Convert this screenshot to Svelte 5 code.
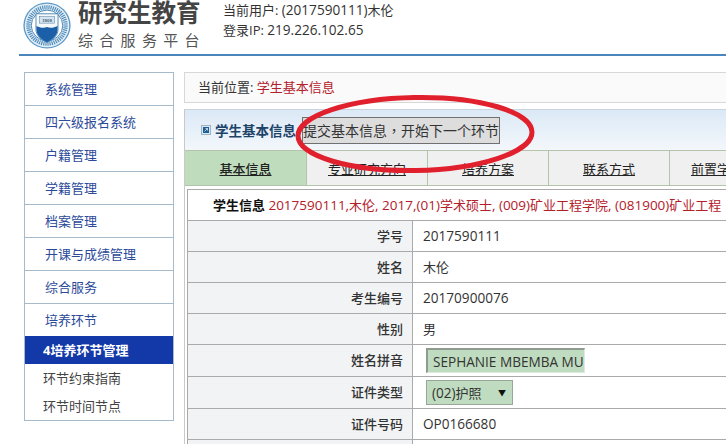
<script>
  const menu = ['系统管理','四六级报名系统','户籍管理','学籍管理','档案管理','开课与成绩管理','综合服务','培养环节'];
  const subs = ['环节约束指南','环节时间节点'];
  const tabs = ['基本信息','专业研究方向','培养方案','联系方式','前置学历信息'];
</script>

<div class="page">
  <header class="top">
    <svg class="logo" viewBox="0 0 50 50" width="48" height="47" preserveAspectRatio="none" aria-hidden="true">
      <circle cx="25" cy="25" r="24.6" fill="#5c9ac8"/>
      <circle cx="25" cy="25" r="23.2" fill="#e4eff7"/>
      <circle cx="25" cy="25" r="19.4" fill="none" stroke="#4f8cba" stroke-width="4.4" stroke-dasharray="1.2 1"/>
      <circle cx="25" cy="25" r="16.4" fill="#fff" stroke="#2f76ab" stroke-width=".9"/>
      <path d="M13.500 12.500h23V29c0 7-5.500 11-11.500 14C19 40 13.500 36 13.500 29z" fill="#f3f8fb" stroke="#2c6ea3" stroke-width=".8"/>
      <rect x="17" y="15.500" width="16" height="7" fill="#d8e5ef" stroke="#5d8aad" stroke-width=".6"/>
      <text x="25" y="20.800" text-anchor="middle" class="year">1909</text>
      <path d="M14 25.500c3.800 2 7.500 2.500 11 1.200 3.500 1.300 7.200.8 11-1.200V29c0 7-5.500 11-11 13.800C19.500 40 14 36 14 29z" fill="#1a5fa8"/>
    </svg>
    <div class="brand">
      <div class="brand-main">研究生教育</div>
      <div class="brand-sub">综合服务平台</div>
    </div>
    <div class="user">
      <div>当前用户: <span class="l">(2017590111)</span>木伦</div>
      <div>登录IP: <span class="l">219.226.102.65</span></div>
    </div>
  </header>

  <div class="body">
    <aside class="side">
      {#each menu as m}
        <div class="item">{m}</div>
      {/each}
      <div class="active">4培养环节管理</div>
      <div class="subs">
        {#each subs as s}
          <div class="sub">{s}</div>
        {/each}
      </div>
    </aside>

    <main class="main">
      <div class="crumb">当前位置: <span class="red">学生基本信息</span></div>
      <section class="panel">
        <div class="head">
          <svg class="ico" viewBox="0 0 10 10" width="10" height="10" aria-hidden="true">
            <rect x=".5" y=".5" width="9" height="9" fill="#dbe8f2" stroke="#9db4c6"/>
            <rect x="2" y="2" width="6" height="6" fill="#1c5f95"/>
            <path d="M3.500 6.500L6.500 3.500M4.500 3.500h2v2" stroke="#fff" stroke-width=".7" fill="none"/>
          </svg>
          <strong class="head-title">学生基本信息</strong>
          <button class="submit" type="button">提交基本信息，开始下一个环节</button>
        </div>
        <div class="tabs">
          {#each tabs as t, i}
            <div class="tab" class:on={i === 0}><span>{t}</span></div>
          {/each}
        </div>
        <div class="table">
          <div class="info"><b>学生信息</b> <span class="red"><span class="m">2017590111,</span>木伦<span class="m">, 2017,(01)</span>学术硕士<span class="m">, (009)</span>矿业工程学院<span class="m">, (081900)</span>矿业工程</span></div>
          <div class="row"><div class="lab">学号</div><div class="val l">2017590111</div></div>
          <div class="row"><div class="lab">姓名</div><div class="val">木伦</div></div>
          <div class="row"><div class="lab">考生编号</div><div class="val l">20170900076</div></div>
          <div class="row"><div class="lab">性别</div><div class="val">男</div></div>
          <div class="row tall"><div class="lab">姓名拼音</div><div class="val"><div class="input l">SEPHANIE MBEMBA MU</div></div></div>
          <div class="row tall"><div class="lab">证件类型</div><div class="val"><div class="select"><span class="l">(02)</span>护照<i>▼</i></div></div></div>
          <div class="row"><div class="lab">证件号码</div><div class="val l">OP0166680</div></div>
          <div class="row"><div class="lab"></div><div class="val"></div></div>
        </div>
      </section>
    </main>
  </div>

  <svg class="ring" viewBox="0 0 726 444" width="726" height="444" aria-hidden="true">
    <ellipse cx="415" cy="134" rx="117" ry="36.500" transform="rotate(-1 415 134)" fill="none" stroke="#e1202e" stroke-width="5"/>
  </svg>
</div>

<style>
  :global(body) { margin: 0; background: #fff; }
  .page {
    position: relative; width: 726px; height: 444px; overflow: hidden;
    font-family: "Open Sans", "Noto Sans CJK SC", sans-serif; font-size: 13px; color: #333;
  }
  .l { font-size: 13.6px; }
  .m { font-size: 13.5px; }
  .top {
    display: flex; height: 54px; margin-left: 19px; border-bottom: 2px solid #4a86bb;
    padding-left: 4px;
  }
  .logo { flex: none; margin-top: 2px; }
  .year { font-family: "Liberation Sans", sans-serif; font-size: 4.500px; font-weight: 700; fill: #3c5f7c; }
  .brand { width: 145px; margin-left: 7px; color: #444; }
  .brand-main { font-size: 24.500px; line-height: 26px; font-weight: 700; white-space: nowrap; }
  .brand-sub { font-size: 15px; line-height: 20px; letter-spacing: 6.300px; margin-top: 4px; white-space: nowrap; color: #555; }
  .user { font-size: 13px; line-height: 19px; white-space: nowrap; }
  .body { display: flex; align-items: flex-start; padding: 16px 0 0 24px; }
  .side { flex: none; width: 148px; border: 1px solid #a5bbcc; }
  .item {
    height: 32px; line-height: 32px; padding-left: 20px; color: #2c4a9a;
    border-bottom: 1px solid #a5bbcc; font-size: 13px;
  }
  .item:nth-child(8) { border-bottom: 0; }
  .active { height: 28px; line-height: 28px; padding-left: 18px; background: #1338a8; color: #fff; font-weight: 700; font-size: 13px; }
  .sub { height: 28px; line-height: 28px; padding-left: 18px; color: #444; font-size: 13px; }
  .main { flex: none; width: 560px; margin-left: 10px; }
  .crumb {
    height: 29px; line-height: 29px; padding-left: 13px; background: #fafafa;
    border: 1px solid #d8d8d8; font-size: 13px;
  }
  .red { color: #b3202a; }
  .panel { margin-top: 6px; border-left: 1px solid #c9c9c9; }
  .head {
    display: flex; align-items: center; height: 41px; padding-left: 16px;
    background: linear-gradient(#dbe9f6, #f3f7fb); border-top: 1px solid #c9d4de; box-sizing: border-box;
  }
  .ico { flex: none; }
  .head-title { color: #1d4468; font-size: 13.500px; margin-left: 4px; white-space: nowrap; }
  .submit {
    font-family: "Noto Sans CJK TC", sans-serif; font-size: 14px; width: 198px; height: 27px; padding: 0; margin-left: 6px; white-space: nowrap;
    background: #dddddd; border: 1px solid #707070; color: #333;
  }
  .tabs { display: flex; height: 36px; border-top: 1px solid #b4c4aa; border-bottom: 1px solid #b4c4aa; box-sizing: border-box; background: #f0f0f0; }
  .tab {
    flex: none; width: 121px; display: flex; align-items: center; justify-content: center;
    border-right: 1px solid #b4c4aa; box-sizing: border-box; font-size: 13px; color: #222;
    text-decoration: underline;
  }
  .tab span { white-space: nowrap; }
  .tab.on { background: #bfdcbd; width: 122px; font-weight: 500; }
  .table { margin: 3px 0 0 2px; border-left: 1px solid #aaa; border-top: 1px solid #aaa; }
  .info { height: 30px; line-height: 30px; padding-left: 25px; border-bottom: 1px solid #aaa; white-space: nowrap; font-size: 13px; }
  .info b { color: #111; font-weight: 700; }
  .row { display: flex; height: 30px; border-bottom: 1px solid #aaa; }
  .row.tall { height: 31px; }
  .lab {
    flex: none; width: 225px; padding-right: 9px; box-sizing: border-box; text-align: right; line-height: 30px;
    background: #f2f3f5; border-right: 1px solid #aaa; font-weight: 500; color: #333;
  }
  .val { padding-left: 10px; line-height: 30px; display: flex; align-items: center; color: #333; }
  .input {
    width: 159px; height: 25px; line-height: 23px; margin-left: 3px; padding-left: 5px; box-sizing: border-box; white-space: nowrap; overflow: hidden;
    background: #c0dcc0; border-top: 2px solid #8f9b8f; border-left: 2px solid #8f9b8f; border-right: 1px solid #dfeadf; border-bottom: 1px solid #dfeadf;
    color: #333;
  }
  .select {
    position: relative; width: 87px; height: 25px; line-height: 23px; margin-left: 3px; padding-left: 5px; box-sizing: border-box;
    background: #c0dcc0; border: 1px solid #9aa59a;
  }
  .select i { position: absolute; right: 6px; top: 0; font-style: normal; font-size: 8px; color: #111; }
  .ring { position: absolute; left: 0; top: 0; pointer-events: none; }
</style>
